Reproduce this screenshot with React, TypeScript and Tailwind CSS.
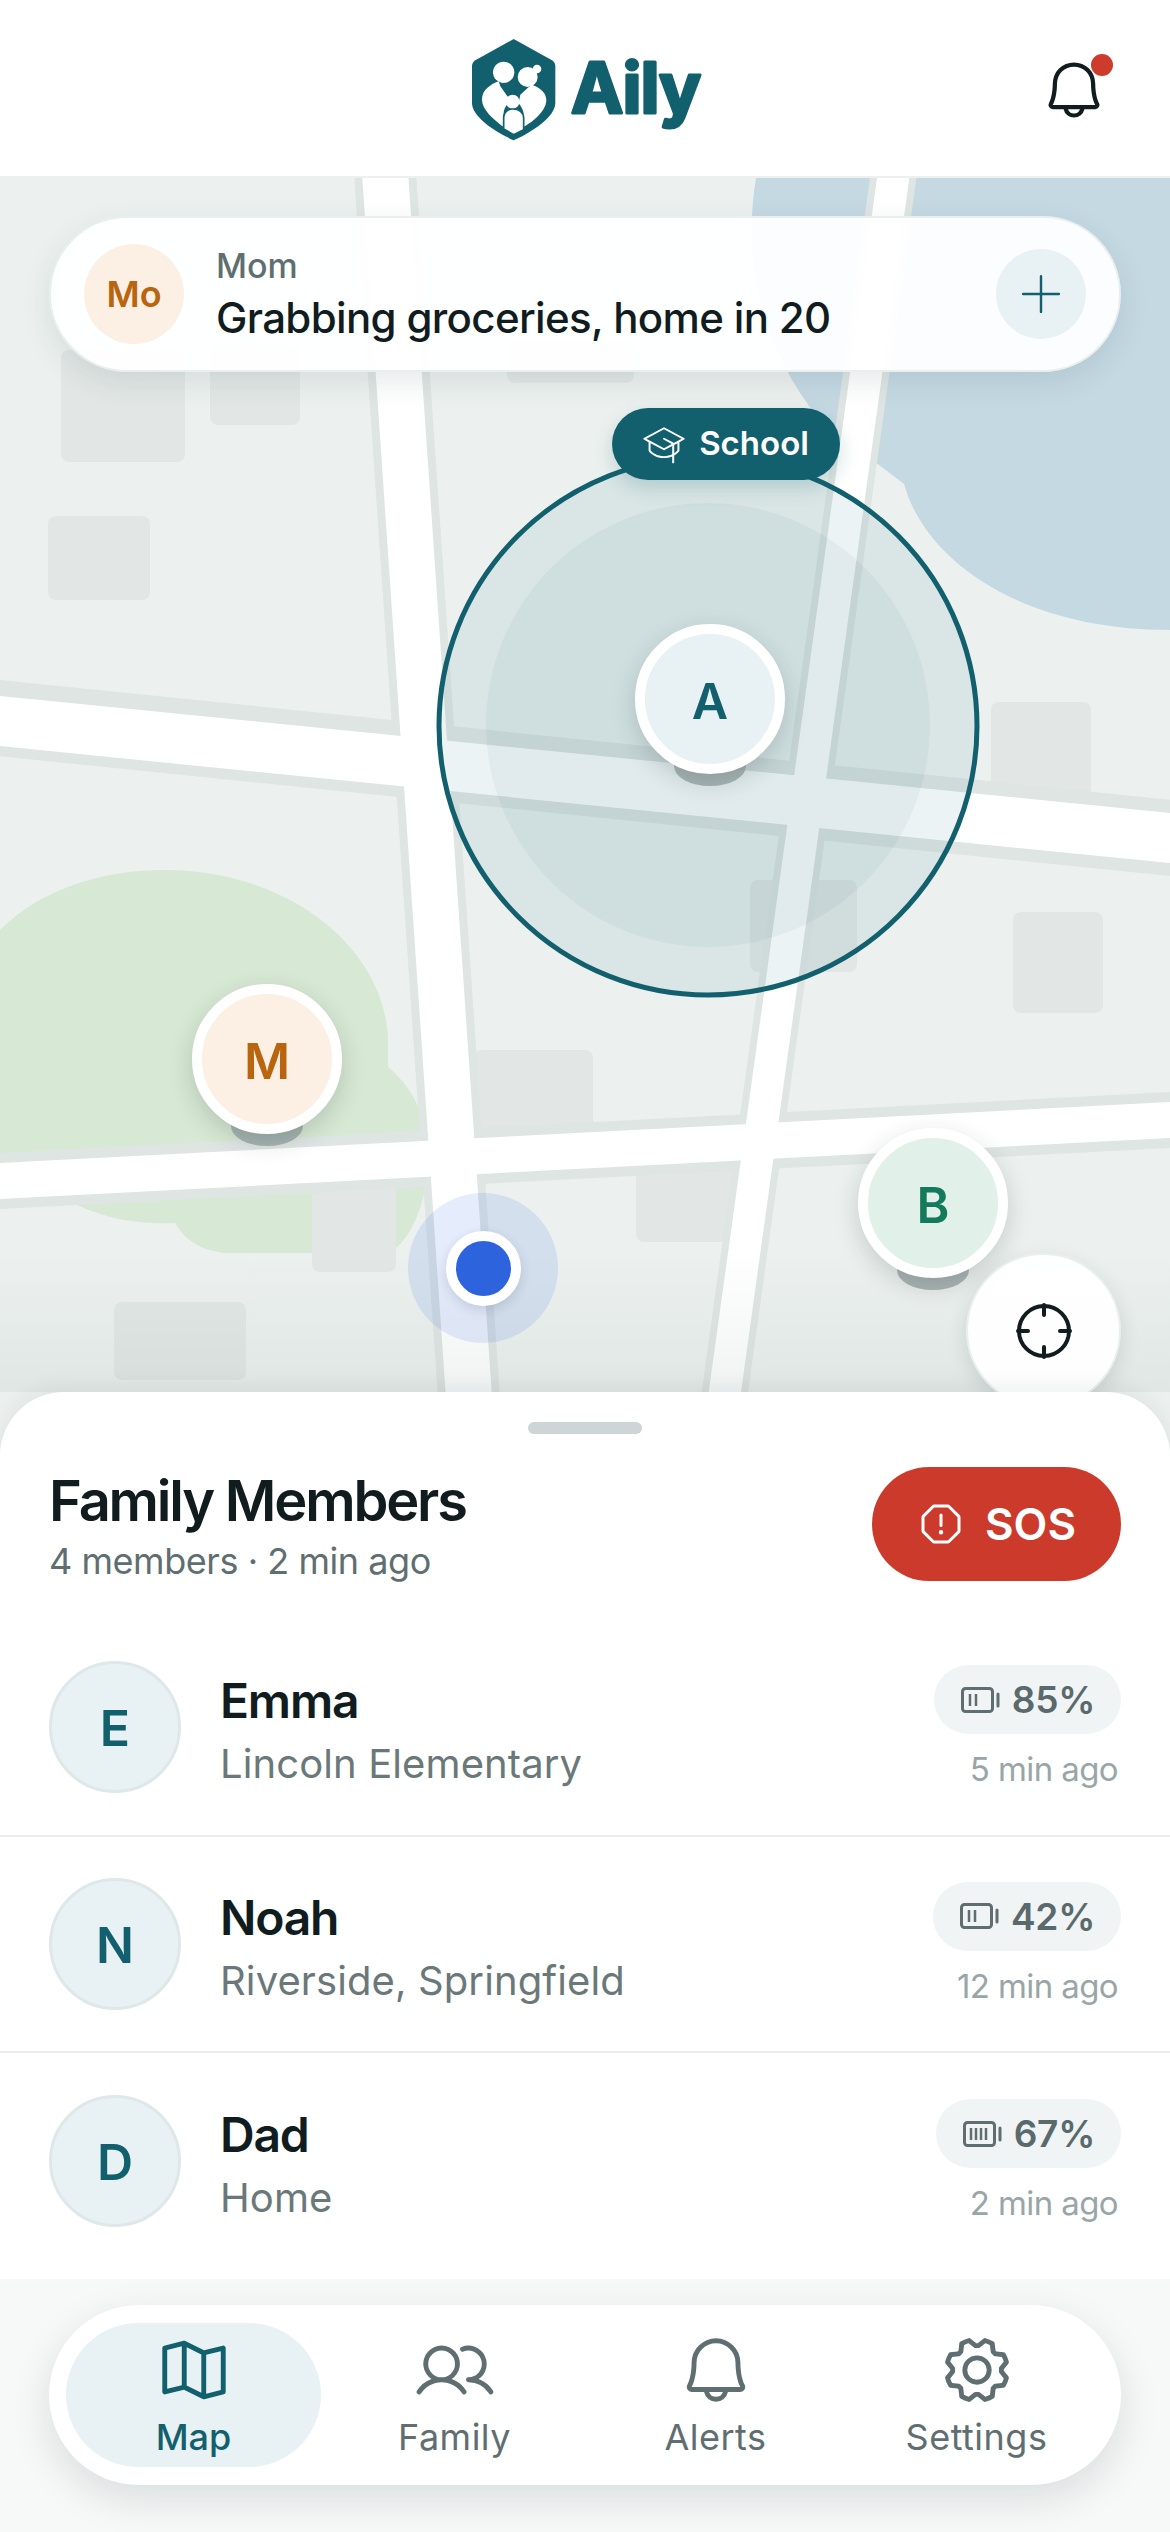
import {
  PiBell,
  PiGear,
  PiGraduationCapLight,
  PiMapTrifold,
  PiPlusLight,
  PiUsers,
  PiWarningOctagon,
} from "react-icons/pi";

const MEMBERS = [
  { initial: "E", name: "Emma", place: "Lincoln Elementary", battery: "85%", bars: 2, time: "5 min ago" },
  { initial: "N", name: "Noah", place: "Riverside, Springfield", battery: "42%", bars: 2, time: "12 min ago" },
  { initial: "D", name: "Dad", place: "Home", battery: "67%", bars: 4, time: "2 min ago" },
];

const BUILDINGS = [
  [61, 350, 124, 112],
  [210, 345, 90, 80],
  [48, 516, 102, 84],
  [507, 340, 127, 43],
  [991, 702, 100, 110],
  [1013, 912, 90, 101],
  [474, 1050, 119, 90],
  [636, 1160, 104, 82],
  [312, 1185, 84, 87],
  [114, 1302, 132, 78],
  [750, 880, 107, 92],
];

function Logo() {
  return (
    <svg width="226" height="110" viewBox="0 0 226 110" className="block overflow-visible">
      {/* family in the shield, traced in 3x coordinates */}
      <g transform="scale(0.3333) translate(-95 -58)">
        <path
          d="M220 58 L335 122 Q345 128 345 140 L345 250 C345 290 280 335 220 362 C160 335 95 290 95 250 L95 140 Q95 128 105 122 Z"
          fill="#12606e"
        />
        <g fill="#fff">
          <circle cx="190" cy="158" r="32" />
          <path d="M175 185 C150 195 125 210 125 240 C125 270 160 300 190 322 L190 280 C190 270 195 262 200 255 L205 235 L180 200 Z" />
          <circle cx="262" cy="172" r="30" />
          <circle cx="290" cy="148" r="13" />
          <path d="M275 195 C300 205 320 220 318 245 C315 275 280 305 250 322 L250 285 C250 270 240 258 235 250 L240 225 L262 205 Z" />
          <circle cx="217" cy="246" r="21" />
          <path
            d="M190 328 L190 295 C190 275 205 268 218 268 C235 268 250 278 250 295 L250 330 L220 345 Z"
            stroke="#12606e"
            strokeWidth="5"
          />
        </g>
      </g>
      <text
        x="99"
        y="74"
        fontFamily="Inter, sans-serif"
        fontSize="70"
        fontWeight="700"
        fill="#12606e"
        stroke="#12606e"
        strokeWidth="3"
        strokeLinejoin="round"
        letterSpacing="-1"
      >
        Aily
      </text>
    </svg>
  );
}

function MapArt() {
  return (
    <svg viewBox="0 178 1170 1278" width="1170" height="1278" className="absolute inset-0 block">
      <rect x="0" y="178" width="1170" height="1278" fill="#ecf1ef" />
      <path
        d="M756 178 C742 260 762 350 820 420 L904 484 C925 560 1020 630 1170 630 L1170 178 Z"
        fill="#c5d9e3"
      />
      <path
        d="M0 930 C40 890 100 870 165 870 C290 870 388 950 388 1043 L388 1067 C410 1085 425 1110 428 1150 C430 1190 415 1240 388 1253 L224 1253 C200 1250 185 1240 175 1223 C130 1225 90 1215 60 1195 L0 1165 Z"
        fill="#d7e8d4"
      />
      {BUILDINGS.map(([x, y, w, h]) => (
        <rect key={`${x}-${y}`} x={x} y={y} width={w} height={h} rx="8" fill="#e2e7e5" />
      ))}
      <g stroke="#dfe5e3" fill="none">
        <path d="M380 100 L473 1456" strokeWidth="62" />
        <path d="M904 100 L716 1456" strokeWidth="46" />
        <path d="M-50 713 L1220 843" strokeWidth="76" />
        <path d="M-50 1183.6 L1220 1117.4" strokeWidth="56" />
      </g>
      <g stroke="#ffffff" fill="none">
        <path d="M380 100 L473 1456" strokeWidth="46" />
        <path d="M904 100 L716 1456" strokeWidth="32" />
        <path d="M-50 716 L1220 843" strokeWidth="50" />
        <path d="M-50 1183.6 L1220 1117.4" strokeWidth="36" />
      </g>
      <circle cx="708" cy="726" r="269" fill="#12606e" fillOpacity="0.08" stroke="#12606e" strokeWidth="5" />
      <circle cx="708" cy="725" r="222" fill="#12606e" fillOpacity="0.05" />
    </svg>
  );
}

function Marker({ letter, left, top, bg, color }: { letter: string; left: string; top: string; bg: string; color: string }) {
  return (
    <div className={`absolute ${left} ${top} h-[162px] w-[150px]`}>
      <div className="absolute bottom-0 left-[39px] h-[40px] w-[72px] rounded-[50%] bg-[#9aa8a6]/80" />
      <div
        className={`absolute left-0 top-0 flex h-[150px] w-[150px] items-center justify-center rounded-full border-[10px] border-white pt-[5px] text-[50px] font-semibold shadow-[0_8px_24px_rgba(20,40,40,0.18)] ${bg} ${color}`}
      >
        {letter}
      </div>
    </div>
  );
}

function Crosshair() {
  return (
    <svg width="56" height="56" viewBox="0 0 56 56" fill="none" stroke="#101c1e" strokeWidth="4" strokeLinecap="round">
      <circle cx="28" cy="28" r="25" />
      <path d="M28 2 V12 M28 44 V54 M2 28 H12 M44 28 H54" />
    </svg>
  );
}

function Battery({ bars }: { bars: number }) {
  const ticks = bars === 2 ? [9, 15] : [8, 13, 18, 23];
  return (
    <svg width="39" height="26" viewBox="0 0 39 26" fill="none" stroke="#5f6e70" className="shrink-0">
      <rect x="1.5" y="1.5" width="30" height="23" rx="3" strokeWidth="3" />
      <path d="M37 7 V19" strokeWidth="3" strokeLinecap="round" />
      {ticks.map((x) => (
        <path key={x} d={`M${x} 7 V19`} strokeWidth="2.5" />
      ))}
    </svg>
  );
}

function MemberRow({ m, last }: { m: (typeof MEMBERS)[number]; last: boolean }) {
  return (
    <div className={`flex h-[216.5px] items-center px-[49px] ${last ? "" : "border-b-2 border-[#e8eced]"}`}>
      <div className="flex h-[132px] w-[132px] shrink-0 items-center justify-center rounded-full border-[3px] border-[#dfe8e9] bg-[#e8f1f3] pt-[3px] text-[50px] font-semibold text-[#12606e]">
        {m.initial}
      </div>
      <div className="ml-[39px] min-w-0 flex-1 pt-[8px]">
        <div className="text-[48px] leading-[56px] font-semibold tracking-[-1.2px] text-[#101c1e]">{m.name}</div>
        <div className="mt-[10px] text-[40px] leading-[50px] tracking-[0.1px] text-[#6a787a]">{m.place}</div>
      </div>
      <div className="flex flex-col items-end">
        <div className="flex h-[69px] items-center gap-[12px] rounded-full bg-[#f0f4f5] pl-[27px] pr-[26px] text-[37px] font-semibold tracking-[-0.3px] text-[#5a6a6c]">
          <Battery bars={m.bars} />
          {m.battery}
        </div>
        <div className="mt-[15px] pr-[3px] text-[33px] leading-[40px] tracking-[-0.6px] text-[#99a6a7]">{m.time}</div>
      </div>
    </div>
  );
}

const NAV = [
  { label: "Map", Icon: PiMapTrifold, active: true },
  { label: "Family", Icon: PiUsers, active: false },
  { label: "Alerts", Icon: PiBell, active: false },
  { label: "Settings", Icon: PiGear, active: false },
];

export default function App() {
  return (
    <div className="flex h-[2532px] w-[1170px] flex-col overflow-hidden bg-white font-['Inter',sans-serif]">
      <header className="relative z-20 flex h-[178px] shrink-0 items-center justify-center border-b-2 border-[#eef0f0] bg-white">
        <div className="mt-[12px]">
          <Logo />
        </div>
        <div className="absolute left-[1040px] top-[56px] h-[68px] w-[68px]">
          <PiBell size={68} className="absolute left-0 top-0 text-[#101c1e]" />
          <div className="absolute left-[51px] top-[-2px] h-[22px] w-[22px] rounded-full bg-[#cc3b2c]" />
        </div>
      </header>

      <main className="relative h-[1278px] shrink-0">
        <MapArt />
        <div className="absolute inset-x-0 bottom-[64px] h-[140px] bg-gradient-to-b from-transparent to-[#8a9a9a]/12" />

        <div className="absolute left-[49px] top-[38px] flex h-[156px] w-[1072px] items-center rounded-full border-2 border-[#e9eeee] bg-white/95 px-[33px] shadow-[0_10px_30px_rgba(20,50,60,0.10)]">
          <div className="flex h-[100px] w-[100px] shrink-0 items-center justify-center rounded-full bg-[#fbf0e3] text-[36px] font-semibold text-[#b9650f]">
            Mo
          </div>
          <div className="ml-[32px] flex-1">
            <div className="text-[34px] leading-[40px] font-medium text-[#5f6e70]">Mom</div>
            <div className="mt-[7px] text-[42px] leading-[50px] font-medium tracking-[-0.65px] text-[#101c1e]">
              Grabbing groceries, home in 20
            </div>
          </div>
          <div className="flex h-[90px] w-[90px] shrink-0 items-center justify-center rounded-full bg-[#e8f1f3] text-[#12606e]">
            <PiPlusLight size={52} />
          </div>
        </div>

        <div className="absolute left-[612px] top-[230px] flex h-[72px] w-[228px] items-center justify-center gap-[14px] rounded-full bg-[#12606e] text-[33px] font-semibold text-white shadow-[0_8px_20px_rgba(18,96,110,0.2)]">
          <PiGraduationCapLight size={42} />
          School
        </div>

        <Marker letter="A" left="left-[635px]" top="top-[446px]" bg="bg-[#e8f1f3]" color="text-[#12606e]" />
        <Marker letter="M" left="left-[192px]" top="top-[806px]" bg="bg-[#fbf0e3]" color="text-[#b9650f]" />
        <Marker letter="B" left="left-[858px]" top="top-[950px]" bg="bg-[#e1f1e9]" color="text-[#137a5c]" />

        <div className="absolute left-[408px] top-[1015px] flex h-[150px] w-[150px] items-center justify-center rounded-full bg-[#2d63dc]/12">
          <div className="h-[75px] w-[75px] rounded-full border-[10px] border-white bg-[#2d63dc] shadow-[0_4px_12px_rgba(20,40,80,0.15)]" />
        </div>

        <div className="absolute left-[966px] top-[1075px] flex h-[155px] w-[155px] items-center justify-center rounded-full border-2 border-[#e9eeee] bg-white/95 shadow-[0_6px_20px_rgba(20,40,40,0.12)]">
          <Crosshair />
        </div>
      </main>

      <section className="relative z-10 mt-[-64px] flex min-h-0 flex-1 flex-col rounded-t-[64px] bg-white shadow-[0_-6px_20px_rgba(20,40,40,0.06)]">
        <div className="mx-auto mt-[30px] h-[12px] w-[114px] shrink-0 rounded-full bg-[#cdd5d7]" />
        <div className="mt-[33px] flex shrink-0 items-start justify-between px-[49px]">
          <div className="pt-[2px]">
            <div className="text-[56px] leading-[64px] font-semibold tracking-[-2.2px] text-[#101c1e]">Family Members</div>
            <div className="mt-[5px] text-[36px] leading-[46px] tracking-[-0.45px] text-[#5f6e70]">4 members · 2 min ago</div>
          </div>
          <button className="flex h-[114px] w-[249px] items-center justify-center gap-[20px] rounded-full bg-[#cc3a2b] text-[44px] font-semibold text-white">
            <PiWarningOctagon size={48} />
            SOS
          </button>
        </div>

        <div className="mt-[36px] shrink-0 pb-[9px]">
          {MEMBERS.map((m, i) => (
            <MemberRow key={m.name} m={m} last={i === MEMBERS.length - 1} />
          ))}
        </div>

        <div className="min-h-0 flex-1 bg-[#f7f8f8] pt-[26px]">
          <nav className="mx-[49px] flex h-[180px] items-center gap-[6px] rounded-full bg-white px-[17px] shadow-[0_14px_40px_rgba(20,40,40,0.12)]">
            {NAV.map(({ label, Icon, active }) => (
              <div
                key={label}
                className={`flex h-[144px] flex-1 flex-col items-center justify-center rounded-[72px] ${
                  active ? "bg-[#e8f1f3] text-[#12606e]" : "text-[#5f6e70]"
                }`}
              >
                <Icon size={78} />
                <span className={`mt-[6px] text-[36px] leading-[44px] ${active ? "font-medium" : "font-normal tracking-[0.5px]"}`}>
                  {label}
                </span>
              </div>
            ))}
          </nav>
        </div>
      </section>
    </div>
  );
}
